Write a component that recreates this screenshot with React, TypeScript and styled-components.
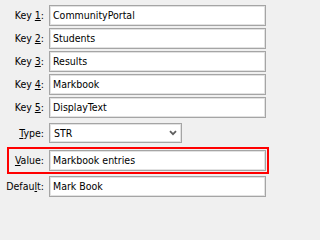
import React from 'react';
import styled, { createGlobalStyle } from 'styled-components';

const Global = createGlobalStyle`
  html, body { margin: 0; padding: 0; background: #f0f0f0; }
  body {
    font-family: "DejaVu Sans Condensed", "DejaVu Sans", sans-serif;
    font-size: 10.5px;
    color: #000;
  }
`;

const Form = styled.div`
  width: 271px;
  height: 202px;
  box-sizing: border-box;
  padding: 5px 5px 0 0;
  display: flex;
  flex-direction: column;
  align-items: flex-start;
  background: #f0f0f0;
`;

const Row = styled.div<{ $gap?: number; $h?: number }>`
  display: grid;
  grid-template-columns: 44px auto;
  column-gap: 5px;
  align-items: center;
  height: ${(p) => p.$h ?? 21}px;
  margin-top: ${(p) => p.$gap ?? 2}px;
`;

const HighlightRow = styled.div`
  box-sizing: border-box;
  display: grid;
  grid-template-columns: 35px 217px;
  column-gap: 5px;
  align-items: center;
  width: 262px;
  height: 27px;
  margin: 4px 0 0 7px;
  border: 2px solid #ff0000;
  padding: 1px 1px 1px 0;
`;

const Label = styled.label`
  text-align: right;
  white-space: nowrap;
  line-height: 13px;
`;

const Key = styled.u`
  text-decoration: underline;
  text-underline-offset: 1px;
`;

const TextBox = styled.input`
  box-sizing: border-box;
  width: 217px;
  height: 21px;
  margin: 0;
  padding: 0 2px 1px 3px;
  border: 1px solid #a5a5a5;
  box-shadow: inset 0 0 0 1px #e2e2e2;
  background: #fff;
  font: inherit;
  color: #000;
  outline: none;
`;

const Combo = styled.div`
  box-sizing: border-box;
  width: 133px;
  height: 20px;
  border: 1px solid #a5a5a5;
  box-shadow: inset 0 0 0 1px #e2e2e2;
  background: #fff;
  display: flex;
  align-items: center;
  justify-content: space-between;
  padding: 0 4px 0 4px;
`;

const ComboText = styled.span`
  line-height: 13px;
`;

const Chevron = () => (
  <svg width="8" height="6" viewBox="0 0 8 6">
    <path d="M1 1.2 L4 4.2 L7 1.2" fill="none" stroke="#5f5f5f" strokeWidth="1.8" />
  </svg>
);

const fields = [
  { n: '1', v: 'CommunityPortal' },
  { n: '2', v: 'Students' },
  { n: '3', v: 'Results' },
  { n: '4', v: 'Markbook' },
  { n: '5', v: 'DisplayText' },
];

export default function App() {
  return (
    <>
      <Global />
      <Form>
        {fields.map((f, i) => (
          <Row key={f.n} $gap={i === 0 ? 0 : 2}>
            <Label>
              Key <Key>{f.n}</Key>:
            </Label>
            <TextBox readOnly value={f.v} />
          </Row>
        ))}
        <Row $gap={5} $h={20}>
          <Label>
            <Key>T</Key>ype:
          </Label>
          <Combo>
            <ComboText>STR</ComboText>
            <Chevron />
          </Combo>
        </Row>
        <HighlightRow>
          <Label>
            <Key>V</Key>alue:
          </Label>
          <TextBox readOnly value="Markbook entries" />
        </HighlightRow>
        <Row $gap={2}>
          <Label>
            Defau<Key>l</Key>t:
          </Label>
          <TextBox readOnly value="Mark Book" />
        </Row>
      </Form>
    </>
  );
}
